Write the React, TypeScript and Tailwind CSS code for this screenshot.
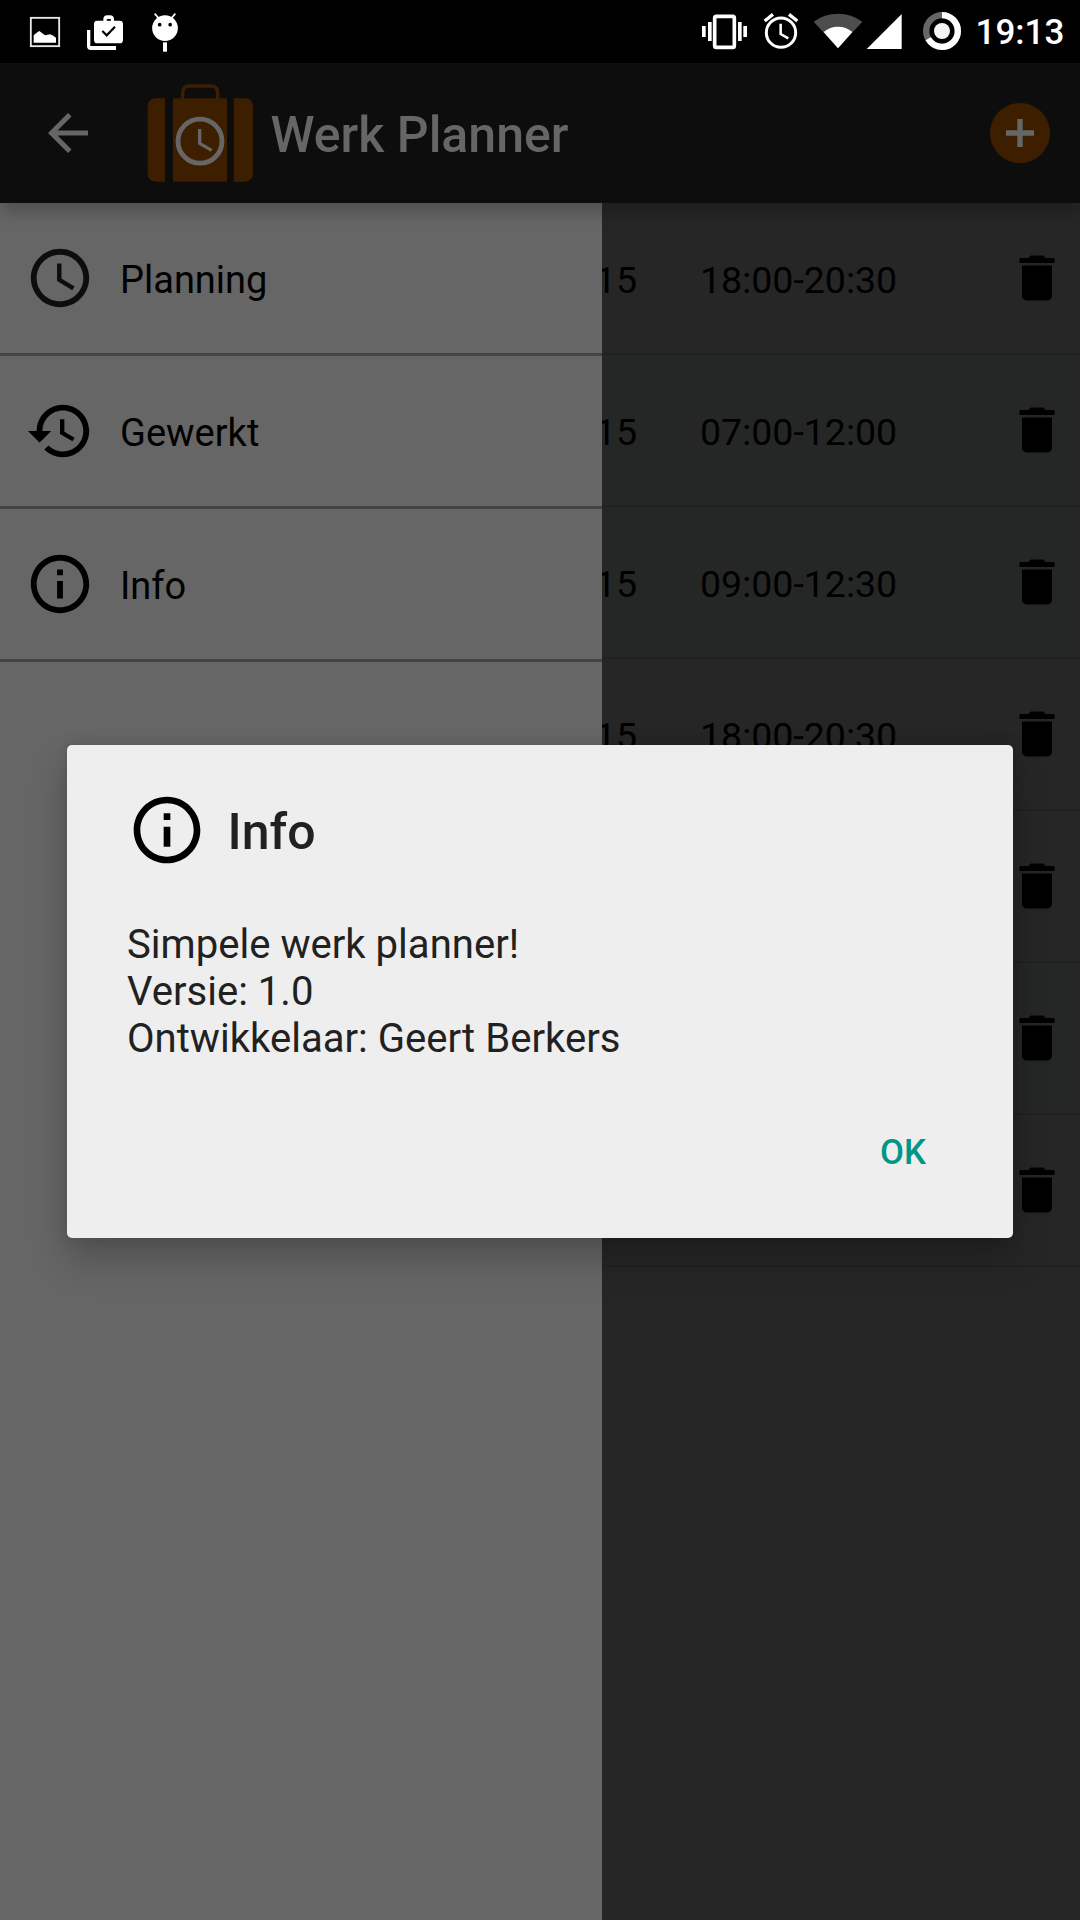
type IconProps = { className?: string };

const ClockIcon = ({ className }: IconProps) => (
  <svg viewBox="0 0 24 24" className={className} fill="currentColor">
    <path d="M12 2C6.500 2 2 6.500 2 12s4.500 10 10 10 10-4.500 10-10S17.500 2 12 2zm0 18c-4.400 0-8-3.600-8-8s3.600-8 8-8 8 3.600 8 8-3.600 8-8 8zm.5-13H11v6l5.200 3.200.8-1.300-4.500-2.700z" />
  </svg>
);

const HistoryIcon = ({ className }: IconProps) => (
  <svg viewBox="0 0 24 24" className={className} fill="currentColor">
    <path d="M13 3c-4.970 0-9 4.030-9 9H1l3.890 3.890.07.14L9 12H6c0-3.870 3.130-7 7-7s7 3.130 7 7-3.130 7-7 7c-1.930 0-3.680-.79-4.940-2.060l-1.420 1.420C8.270 19.990 10.510 21 13 21c4.970 0 9-4.030 9-9s-4.030-9-9-9zm-1 5v5l4.280 2.540.72-1.210-3.500-2.080V8H12z" />
  </svg>
);

const InfoIcon = ({ className }: IconProps) => (
  <svg viewBox="0 0 24 24" className={className} fill="currentColor">
    <path d="M11 17h2v-6h-2v6zm1-15C6.480 2 2 6.480 2 12s4.480 10 10 10 10-4.480 10-10S17.520 2 12 2zm0 18c-4.410 0-8-3.590-8-8s3.590-8 8-8 8 3.590 8 8-3.590 8-8 8zM11 9h2V7h-2v2z" />
  </svg>
);

const TrashIcon = ({ className }: IconProps) => (
  <svg viewBox="0 0 24 24" className={className} fill="currentColor">
    <path d="M6 19c0 1.100.9 2 2 2h8c1.100 0 2-.9 2-2V7H6v12zM19 4h-3.500l-1-1h-5l-1 1H5v2h14V4z" />
  </svg>
);

const BackIcon = ({ className }: IconProps) => (
  <svg viewBox="0 0 24 24" className={className} fill="currentColor">
    <path d="M20 11H7.830l5.590-5.590L12 4l-8 8 8 8 1.410-1.410L7.830 13H20v-2z" />
  </svg>
);

const NotificationIcons = () => (
  <svg viewBox="0 0 561 189" className="h-[63px] w-[187px]" fill="#fff">
    <rect x="92.500" y="53.500" width="85" height="85" fill="none" stroke="#e8e8e8" strokeWidth="5.500" />
    <path d="M101 128V106l9-8 8-5 17 13 15-3 10 4 8 6v15z" />
    <path d="M261 90h10v48h77v12h-75q-12 0-12-12z" />
    <path fillRule="evenodd" d="M292 62h18v-4q0-12 12-12h8q12 0 12 12v4h17q10 0 10 10v47q0 11-10 11h-67q-10 0-10-11V72q0-10 10-10zm28 0h13v-2q0-3-3-3h-7q-3 0-3 3z" />
    <path d="M307 93l13 13 25-26" fill="none" stroke="#000" strokeWidth="6.500" />
    <path d="M464 41l14 16M526 41l-14 16" stroke="#fff" strokeWidth="5" />
    <circle cx="495" cy="84.500" r="38.500" />
    <circle cx="479" cy="74" r="5.500" fill="#000" />
    <circle cx="510.500" cy="74" r="5.500" fill="#000" />
    <rect x="489" y="127" width="12" height="28" />
  </svg>
);

const SystemIcons = () => (
  <svg viewBox="60 0 792 189" className="h-[63px] w-[264px]" fill="#fff">
    <rect x="104" y="49" width="59" height="93" rx="5" fill="none" stroke="#fff" strokeWidth="11" />
    <path d="M66 78h11v33H66zM84 66h11v57H84zM174 66h11v57h-11zM190 78h11v33h-11z" />
    <circle cx="303" cy="98" r="44" fill="none" stroke="#fff" strokeWidth="9" />
    <path d="M302 71v31l23 13" fill="none" stroke="#fff" strokeWidth="7.500" />
    <path d="M254 63l25-20M352 63l-25-20" stroke="#fff" strokeWidth="10" />
    <path d="M401 65Q433 41 474 41T547 65L474 145z" fill="#4d4d4d" />
    <path d="M431 96Q450 80 474 80T517 96L474 145z" />
    <path d="M560 147L665 42v105z" />
    <circle cx="786" cy="93" r="47.500" fill="none" stroke="#666" strokeWidth="19" />
    <circle
      cx="786"
      cy="93"
      r="47.500"
      fill="none"
      stroke="#fff"
      strokeWidth="19"
      strokeDasharray="198 400"
      transform="rotate(-90 786 93)"
    />
    <circle cx="786" cy="93" r="24" fill="#f5f5f5" />
  </svg>
);

const SuitcaseLogo = () => (
  <svg viewBox="441 249 318 300" className="h-[100px] w-[106px]" fill="#3d1f00">
    <path d="M495 295v250h-26q-26 0-26-26V321q0-26 26-26z" />
    <rect x="519" y="295" width="162" height="250" />
    <path d="M702 295v250h31q26 0 26-26V321q0-26-26-26z" />
    <path d="M548 297v-18q0-21 21-21h63q21 0 21 21v18" fill="none" stroke="#3d1f00" strokeWidth="10.500" />
    <circle cx="600" cy="423.500" r="66" fill="none" stroke="#666" strokeWidth="14.500" />
    <path d="M599 387v43l36 21" fill="none" stroke="#666" strokeWidth="10" />
  </svg>
);

const drawerItems = [
  { label: "Planning", Icon: ClockIcon, tone: "text-[#0d0d0d]" },
  { label: "Gewerkt", Icon: HistoryIcon, tone: "text-black" },
  { label: "Info", Icon: InfoIcon, tone: "text-black" },
];

const shifts = [
  { day: "15", time: "18:00-20:30", tone: "bg-[#262626]" },
  { day: "15", time: "07:00-12:00", tone: "bg-[#252726]" },
  { day: "15", time: "09:00-12:30", tone: "bg-[#252726]" },
  { day: "15", time: "18:00-20:30", tone: "bg-[#262626]" },
  { day: "", time: "", tone: "bg-[#262626]" },
  { day: "", time: "", tone: "bg-[#252726]" },
  { day: "", time: "", tone: "bg-[#262626]" },
];

function StatusBar() {
  return (
    <div className="flex h-[63px] items-center bg-black text-white">
      <NotificationIcons />
      <div className="ml-auto flex items-center pr-[15px]">
        <SystemIcons />
        <span className="ml-[11.500px] w-[89.500px] pt-[3px] text-[35px] leading-[60px] font-medium">19:13</span>
      </div>
    </div>
  );
}

function AppBar() {
  return (
    <header className="relative z-10 flex h-[140px] items-center bg-[#0d0d0d] pr-[30px] pl-[38px] text-[#666] shadow-[0_11px_14px_-1px_rgba(0,0,0,0.2)]">
      <BackIcon className="size-[60px]" />
      <div className="ml-[49px] flex items-center">
        <SuitcaseLogo />
        <h1 className="ml-[17.500px] pt-1 text-[50px] leading-[60px] font-medium">Werk Planner</h1>
      </div>
      <button className="ml-auto flex size-[60px] items-center justify-center rounded-full bg-[#3d1f00]">
        <svg viewBox="0 0 28 28" className="size-7" fill="currentColor">
          <path d="M11.300 0h5.400v11.300H28v5.400H16.700V28h-5.400V16.700H0v-5.400h11.300z" />
        </svg>
      </button>
    </header>
  );
}

function InfoDialog() {
  return (
    <div className="absolute top-[745px] left-[67px] z-20 flex h-[493px] w-[946px] flex-col rounded-[5px] bg-[#eee] px-[60px] pt-[45px] text-[#212121] shadow-[0_22px_38px_rgba(0,0,0,0.22),0_0_14px_rgba(0,0,0,0.12)]">
      <div className="flex h-20 items-center">
        <InfoIcon className="size-20 text-black" />
        <h2 className="ml-[20.500px] pt-1 text-[50px] leading-[60px] font-medium">Info</h2>
      </div>
      <div className="mt-[51px] text-[40.100px] leading-[47px]">
        <p>Simpele werk planner!</p>
        <p>Versie: 1.0</p>
        <p>Ontwikkelaar: Geert Berkers</p>
      </div>
      <button className="mt-[70px] mr-[27px] self-end text-[34.800px] leading-[40px] font-medium text-[#009688]">OK</button>
    </div>
  );
}

export default function App() {
  return (
    <div className="relative flex h-[1920px] w-[1080px] flex-col overflow-hidden bg-[#262626] font-['Roboto',sans-serif]">
      <StatusBar />
      <AppBar />
      <div className="flex flex-1">
        <nav className="w-[602px] bg-[#666]">
          {drawerItems.map(({ label, Icon, tone }) => (
            <div key={label} className="flex h-[153px] items-center border-b-[3px] border-[#444] pl-[25px]">
              <Icon className={`size-[70px] ${tone}`} />
              <span className="ml-[25px] pt-1 text-[38px] leading-[48px] text-black">{label}</span>
            </div>
          ))}
        </nav>
        <main className="flex-1 overflow-hidden text-[37.500px] leading-[48px] text-black">
          {shifts.map(({ day, time, tone }, i) => (
            <div key={i} className={`flex h-[152px] items-center border-b-2 border-[#222] pr-[13px] ${tone}`}>
              <span className="-ml-[7px] w-[105px] pt-[3px]">{day}</span>
              <span className="pt-[3px]">{time}</span>
              <TrashIcon className="ml-auto size-[60px]" />
            </div>
          ))}
        </main>
      </div>
      <InfoDialog />
    </div>
  );
}
